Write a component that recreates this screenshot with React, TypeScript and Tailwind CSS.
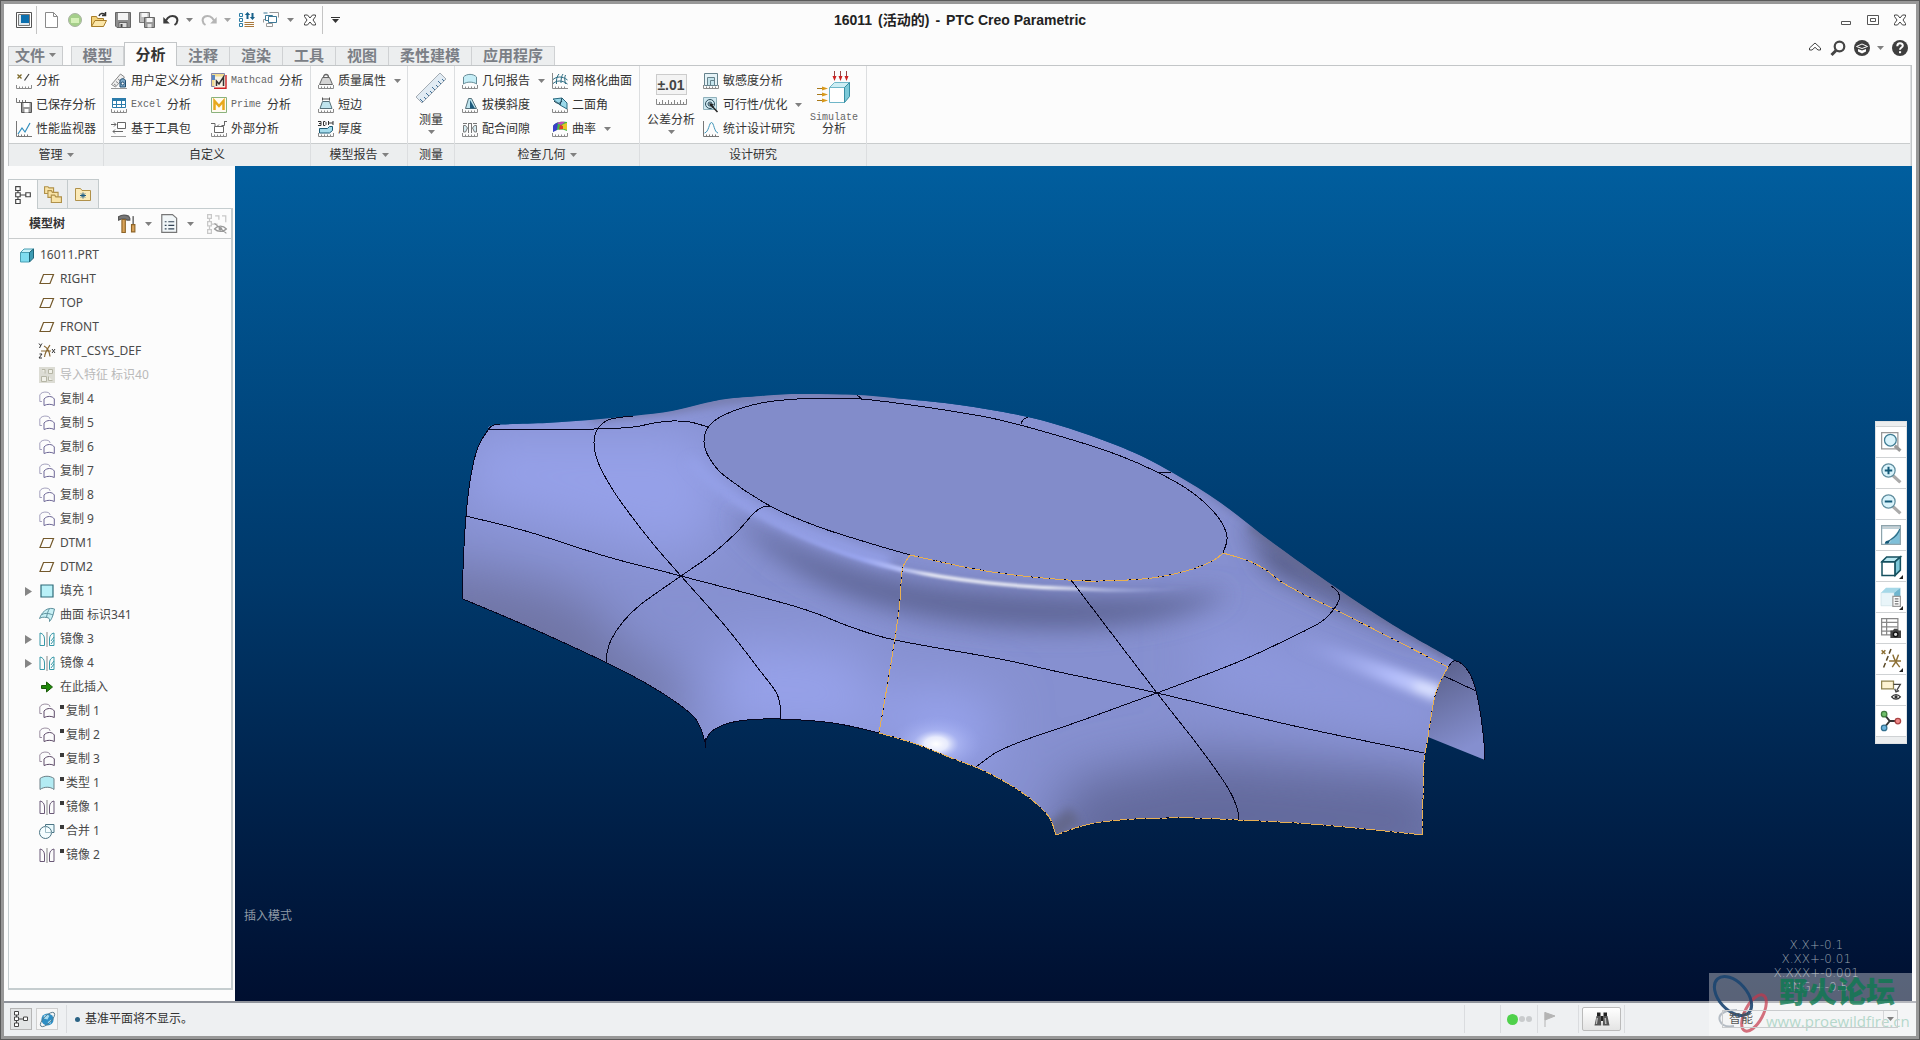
import type { ReactNode } from "react";
import clsx from "clsx";

/* ---------- icons, all on a 16x16 grid ---------- */

const Ruler = () => (
  <path d="M.5 12v3.500h15V12M3.500 13.500v2M6.500 13.500v2M9.500 13.500v2M12.500 13.500v2" stroke="#8a8a8a" fill="none" />
);

const Copy = ({ color }: { color: string }) => (
  <g fill="none" stroke={color}>
    <path d="M3 10.500H.8V4C2 1.500 5 .7 8 1.200c2 .4 3 1.300 3 2.800" opacity=".6" />
    <path d="M5 14.500V8c1.500-1.700 3.500-2.500 5.500-2.500S14.500 6.500 15.300 8v6.500c-3-1.600-7-1.600-10.300 0z" />
  </g>
);

const Mirror = ({ color, accent }: { color: string; accent?: boolean }) => (
  <g fill="none" stroke={color}>
    <path d="M1 2v12.500h4.500V8C5.500 5 4 2.500 1 2z" />
    <path d="M15 2v12.500h-4.500V8c0-3 1.500-5.500 4.500-6z" />
    <path d="M8 1v15" stroke="#888" />
    {accent && <path d="M12 10l3-4M12 13l3-4" />}
  </g>
);

const icons: Record<string, ReactNode> = {
  app: (
    <>
      <path d="M.5.500h15v15H.500z" fill="#fff" stroke="#555" />
      <path d="M2.500 2.500h11v11h-11z" fill="#dfe9ee" stroke="#777" />
      <path d="M5 3h8v8H5z" fill="#0b6fae" />
    </>
  ),
  newFile: <path d="M2.500.500h8l4 4v11h-12zM10.500.500v4h4" fill="#fff" stroke="#8a8a8a" />,
  globe: (
    <>
      <circle cx="8" cy="8" r="6.500" fill="#a5cf8a" stroke="#a9b3a2" />
      <path d="M4 6h8v5H4z" fill="#d5f0b8" />
    </>
  ),
  open: (
    <>
      <path d="M.5 14V4.500h5l1 2h6V14z" fill="#f3d27a" stroke="#a87d29" />
      <path d="M.5 14.500L4 8.500h11.500l-3 6z" fill="#fbe6a8" stroke="#a87d29" />
      <path d="M8 4c1-3 4-3 6-1.500M14.500 0v3.500H11" fill="none" stroke="#333" strokeWidth="1.500" />
    </>
  ),
  save: (
    <>
      <path d="M.5.500h15v15H2l-1.500-1.500z" fill="#8d8d8d" stroke="#666" />
      <path d="M3 1h10v7H3z" fill="#f4f4f4" />
      <path d="M4 10.500h8v5H4z" fill="#ddd" stroke="#666" />
      <path d="M5.500 12h2v3h-2z" fill="#444" />
    </>
  ),
  saveAll: (
    <>
      <path d="M.5.500h10v10H.500z" fill="#bbb" stroke="#777" />
      <path d="M2.500 1h6v4h-6z" fill="#f7f7f7" />
      <path d="M5.500 5.500h10v10h-10z" fill="#9a9a9a" stroke="#666" />
      <path d="M7.500 6h6v4h-6z" fill="#f7f7f7" />
      <path d="M8.500 12h4v3.500h-4z" fill="#e5e5e5" />
    </>
  ),
  undo: (
    <>
      <path d="M3 8.500C5 4.500 9 3 12 4.500c3.500 1.800 3 6.500-.5 8.500" fill="none" stroke="#3c3c3c" strokeWidth="2" />
      <path d="M.3 5v6.500h6.500z" fill="#3c3c3c" />
    </>
  ),
  redo: (
    <>
      <path d="M13 8.500C11 4.500 7 3 4 4.500.5 6.300 1 11 4.500 13" fill="none" stroke="#b5b5b5" strokeWidth="2" />
      <path d="M15.700 5v6.500H9.200z" fill="#b5b5b5" />
    </>
  ),
  regen: (
    <>
      <path d="M.5 1.500h3v3h-3zM.5 6.500h3v3h-3zM.5 11.500h3v3h-3z" fill="none" stroke="#2b7da5" />
      <path d="M5.500 10.500H15M5.500 12.500H15M5.500 14.500H15" stroke="#a9793c" fill="none" />
      <path d="M7.500 7V3H5.800L8.500 0l2.700 3H9.500v4zM12.500 1v4h-1.700l2.700 3 2.500-3h-1.500V1z" fill="#18618a" />
    </>
  ),
  windows: (
    <g fill="#fff" stroke="#3c7896">
      <path d="M.5 10.500V7.500h4M6.500.500h9v5" fill="none" stroke="#999" />
      <path d="M2.500 3.500h7v5h-7zM.5 1h4" />
      <path d="M5.500 4.500h8v6h-8z" />
      <path d="M3.500 11.500h6v3h-6z" stroke="#999" />
    </g>
  ),
  close: (
    <path
      d="M2.500 3h3L8 6l2.500-3h3v1.500L11 8l2.500 3.500V13h-3L8 10l-2.500 3h-3v-1.500L5 8 2.500 4.500z"
      fill="#fff"
      stroke="#444"
    />
  ),
  minimize: <path d="M3.500 9.500h9v3h-9z" fill="#fff" stroke="#555" />,
  restore: <path d="M2.500 3.500h11v9h-11zM5.500 6.500h5v3h-5z" fill="#fff" stroke="#555" />,
  collapse: <path d="M8 3L2.500 8v2H5l3-2.700L11 10h2.500V8z" fill="#fff" stroke="#444" />,
  search: (
    <g fill="none" stroke="#444" strokeWidth="2.200">
      <circle cx="9.500" cy="6.500" r="4.800" />
      <path d="M6 10.500L1.500 15" strokeWidth="3" />
    </g>
  ),
  learning: (
    <>
      <circle cx="8" cy="8" r="8" fill="#3f3f3f" />
      <path d="M2.500 6.500L8 4l5.500 2.500L8 8.500z" fill="none" stroke="#fff" />
      <path d="M4 9l4 1.500L12 9v2.500L8 13.500 4 11.500z" fill="#fff" />
    </>
  ),
  help: (
    <>
      <circle cx="8" cy="8" r="8" fill="#3f3f3f" />
      <path d="M5.300 6.200C5.300 4 6.500 3.200 8 3.200s2.800 1 2.800 2.500C10.800 7.500 8 7.700 8 9.800" fill="none" stroke="#fff" strokeWidth="2" />
      <path d="M7 11.200h2.100v2H7z" fill="#fff" />
    </>
  ),
  analysis: (
    <>
      <path d="M1.500 1.500l4 4M5.500 1.500l-4 4" stroke="#7d6a2a" strokeWidth="1.300" />
      <path d="M8.500 7.500L13 1" stroke="#444" strokeWidth="1.300" />
      <Ruler />
    </>
  ),
  savedAnalysis: (
    <>
      <path d="M.5 1v4.500h11M3.500 3v2M6.500 3v2M9.500 3v2" stroke="#777" fill="none" />
      <path d="M5.500 5.500h10v10h-10z" fill="#999" stroke="#555" />
      <path d="M7.500 6h6v4h-6zM8.500 12h4v3.500h-4z" fill="#fff" />
    </>
  ),
  monitor: (
    <>
      <path d="M.5 0v15.500H16M2.500 13.500v2M5.500 13.500v2M8.500 13.500v2M11.500 13.500v2" stroke="#777" fill="none" />
      <path d="M2 13l4-6 3 4 5-9" stroke="#2f8dbd" fill="none" strokeWidth="1.200" />
    </>
  ),
  userAnalysis: (
    <>
      <path d="M.5 11.500L9.500 1l4 3-9 10z" fill="#eee" stroke="#888" />
      <path d="M3 11l2 1.500M5 8.500l2 1.500M7 6l2 1.500" stroke="#888" />
      <path d="M0 15.500h16" stroke="#999" />
      <path d="M9 8c0-3 5.500-3 5.500 0v6H9z" fill="#7fa9c8" stroke="#1f4c70" />
      <circle cx="11.700" cy="10.500" r="1.500" fill="#fff" stroke="#1f4c70" />
    </>
  ),
  excel: (
    <>
      <path d="M1.500 1.500h13v9h-13z" fill="#fff" stroke="#2c7cab" />
      <path d="M1 1h14v3H1z" fill="#2c7cab" />
      <path d="M1.500 7.500h13M5.500 2v9M10.500 2v9" stroke="#2c7cab" />
      <Ruler />
    </>
  ),
  toolkit: (
    <>
      <path d="M6.500 1.500h8v6h-8z" fill="#fff" stroke="#666" />
      <path d="M0 3.500h5M3 1.500l2 2-2 2M12 10.500H2M4 8.500l-2 2 2 2" fill="none" stroke="#666" />
      <path d="M0 15.500h15" stroke="#999" />
    </>
  ),
  mathcad: (
    <>
      <path d="M.5.500h13v13H.500z" fill="#f1dc92" stroke="#88a" />
      <path d="M3.500 3.500h11v11h-11z" fill="#f7f3e6" />
      <path d="M15 2v13.200H3" stroke="#c22" strokeWidth="1.400" fill="none" />
      <path d="M5.500 13V8l2.500 3 4.500-7v9" stroke="#333" strokeWidth="1.500" fill="none" />
      <path d="M1 2h3v5H1z" fill="#5a86c0" />
    </>
  ),
  prime: (
    <>
      <path d="M.5.500h15v15H.500z" fill="#fffaf0" stroke="#8ab27c" />
      <path d="M3.500 13V4l4.500 5 4.500-5v9" fill="none" stroke="#e8a81c" strokeWidth="2.500" />
    </>
  ),
  external: (
    <>
      <path d="M3.500 5.500h9v6h-9z" fill="#fff" stroke="#666" />
      <path d="M0 2.500h4v3M13.500 1v3.500h-3M16 .5h-3M6 5.500l2-2" fill="none" stroke="#666" />
      <Ruler />
    </>
  ),
  mass: (
    <>
      <path d="M4.500 4.500h7l3 7h-13z" fill="#d4d4d4" stroke="#666" />
      <path d="M5.500 4.500c0-4 5-4 5 0" fill="none" stroke="#666" strokeWidth="1.300" />
      <Ruler />
    </>
  ),
  shortEdge: (
    <>
      <path d="M4.500 4.500h7l2.500 7H2z" fill="#bfe4ee" stroke="#55707a" />
      <path d="M4.500.500v3M11.500.500v3M4.500 2h7" stroke="#555" fill="none" />
      <Ruler />
    </>
  ),
  thickness: (
    <>
      <path d="M1.500 7.500h8l2-2h3v4l-3 2.500h-10z" fill="#a5dcec" stroke="#1c5b75" />
      <path d="M0 .5h3v4H0M1 2.500h2M5.500.500v4H7l1-1V1.500l-1-1zM10.500 0v4M15 0v4M10.500 2H15" fill="none" stroke="#333" />
      <Ruler />
    </>
  ),
  geomReport: (
    <>
      <path d="M1.500 11V4c3-3.500 10-3.500 13 0v7c-3-2.500-10-2.500-13 0z" fill="#c5edf6" stroke="#668b96" />
      <Ruler />
    </>
  ),
  draft: (
    <>
      <path d="M3.500 11.500L6.500 1.500h3l5 10z" fill="#bfe4ee" stroke="#55707a" />
      <path d="M8 3v8.500h5z" fill="#1e5b7d" />
      <Ruler />
    </>
  ),
  clearance: (
    <>
      <path d="M1.500 4.500h2l2 2.500-2 4h-2zM14.500 4.500h-2L10.500 7l2 4h2z" fill="#d5ecf2" stroke="#777" />
      <path d="M6.500 3v9M9.500 3v9M1 2.500h4M11 2.500h4M6 2.500h4" stroke="#777" fill="none" />
      <Ruler />
    </>
  ),
  mesh: (
    <>
      <path d="M.5 7c4-4 10-4 15 0M.5 11c4-4 10-4 15 0M4.500 11C4 7 5 3 7 1M9 10c0-4 .5-7 2-9M13.500 11c-1-4-1-7 0-9" fill="none" stroke="#2a6a80" />
      <path d="M.5 0v15.500H16M3.500 13.500v2M6.500 13.500v2M9.500 13.500v2M12.500 13.500v2" stroke="#8a8a8a" fill="none" />
    </>
  ),
  dihedral: (
    <>
      <path d="M1 2l9-1 5 5v6L8 8z" fill="#9bd9ea" stroke="#2a6a80" />
      <path d="M2 4c3 3 6 3 8 0M10 1L8 8" stroke="#173f52" fill="none" />
      <Ruler />
    </>
  ),
  curvature: (
    <>
      <path d="M1 11V5c2-4 8-5 14-4v9c-5-2-10-2-14 1z" fill="#45b648" />
      <path d="M1 11V5c1-2 3-3 5-3.500L5 9z" fill="#3a3fc9" />
      <path d="M5 2c2-1 5-1.500 8-1L9 4z" fill="#c04ac0" />
      <path d="M10 4c2-1 3-2 5-2v7c-2-1-3-1-5-1z" fill="#e8c526" />
      <path d="M8 4l3 1v3l-4 .5z" fill="#de3b2b" />
      <Ruler />
    </>
  ),
  sensitivity: (
    <>
      <path d="M1.500.500h13v12h-13z" fill="#e6f3f7" stroke="#66828c" />
      <path d="M4.500 4.500h7v8h-7zM7.500 7.500h4v5h-4z" fill="#c5e4ec" stroke="#66828c" />
      <Ruler />
    </>
  ),
  feasibility: (
    <>
      <path d="M.5.500h13v12H.500z" fill="#d0e9f1" stroke="#8fb0bb" />
      <circle cx="7" cy="7" r="4.500" fill="none" stroke="#2b4b5a" />
      <circle cx="7" cy="7" r="2" fill="none" stroke="#2b4b5a" />
      <path d="M7 7l7.500 8" stroke="#222" strokeWidth="1.500" />
      <path d="M6 6l5 1.500L8 10z" fill="#222" />
    </>
  ),
  statistics: (
    <>
      <path d="M.5 0v15.500H16M3.500 13.500v2M6.500 13.500v2M9.500 13.500v2M12.500 13.500v2" stroke="#777" fill="none" />
      <path d="M1.500 12C6 11 6 1.500 8.500 1.500S11 11 15 12" fill="none" stroke="#3f94b8" />
    </>
  ),
  treeTab: (
    <path d="M1.500.500h4v3.500h-4zM1.500 6h4v3.500h-4zM1.500 12h4v3.500h-4zM10.500 6h4v3.500h-4zM3.500 4v2M3.500 9.500V12M5.500 8h5" fill="#fff" stroke="#444" />
  ),
  folders: (
    <g fill="#f8e3a6" stroke="#b0914a">
      <path d="M.5 1.500h3l1 1h4v5h-8z" />
      <path d="M3.500 5h3l1 1.500h5v4.500h-9z" />
      <path d="M6.500 9h3l1 1.500h5v5h-9z" />
    </g>
  ),
  favorites: (
    <>
      <path d="M.5 14.500v-12h5l1.500 2h8.500v10z" fill="#fbeab8" stroke="#b0914a" />
      <path d="M8 6.500v6M5 9.500h6M6 7.500l4 4M10 7.500l-4 4" stroke="#1c5b85" />
    </>
  ),
  hammer: (
    <>
      <path d="M.5 1.500C3 0 7 0 9.500 1l1 2v1.500H8L6.500 3.500H3L.5 4.500z" fill="#777" stroke="#555" />
      <path d="M3.500 4h3v11.500h-3z" fill="#d9a35a" stroke="#8d6427" />
      <path d="M13.500 1v7" stroke="#777" strokeWidth="1.500" />
      <path d="M12 8.500h3V15h-3z" fill="#d9a35a" stroke="#8d6427" />
    </>
  ),
  listPage: (
    <>
      <path d="M1.500.500h9l3.500 3v12H1.500z" fill="#f1f6f8" stroke="#777" />
      <path d="M4 6.500h1.500M4 9.500h1.500M4 12.500h1.500M7 6.500h5M7 9.500h5M7 12.500h5" stroke="#345" />
    </>
  ),
  treeHidden: (
    <>
      <path d="M.5.500h3v3h-3zM.5 6h3v3.500h-3zM.5 12.500h3v3h-3zM6.500 1.500h3v3M2 3.500V6M2 9.500v3M3.500 8h5M12 1.500h3v5" fill="none" stroke="#c8c8c8" />
      <path d="M6 12c2.500-3 7-3 9.500 0-2.500 2.500-7 2.500-9.500 0zM6 7.500l9.500 8" fill="none" stroke="#999" />
      <circle cx="10.700" cy="11.800" r="1.500" fill="#999" />
    </>
  ),
  part: (
    <>
      <path d="M1.500 5.500h9v9.500h-9z" fill="#7fdcef" stroke="#4b9fb3" />
      <path d="M1.500 5.500L5 2h9.500l-4 3.500z" fill="#c9f1f8" stroke="#4b9fb3" />
      <path d="M10.500 5.500l4-3.500v9l-4 4z" fill="#3d9cb4" stroke="#1e6376" />
    </>
  ),
  plane: <path d="M4.500 3.500h10l-3.500 9H1z" fill="none" stroke="#74592c" strokeWidth="1.200" />,
  csys: (
    <>
      <path d="M2 8h10M5 3c3 1.500 5.500 6 6 10.500M11 2c-2 3-5 7-5.500 12" stroke="#8a6a34" fill="none" strokeWidth="1.200" />
      <path d="M0 .5l1.500 2L3 .5M2 2L.5 5M.5 11H3l-3 4h3M13 6l3 4M16 6l-3 4" stroke="#333" fill="none" />
    </>
  ),
  imported: (
    <>
      <path d="M0 0h16v16H0z" fill="#dcdcd4" />
      <path d="M2.500 9.500h5v5h-5zM9.500 2.500h4v4h-4zM3 2.500h3v4M9.500 9.500v4h4" fill="#f0f0e8" stroke="#b5b5a5" />
    </>
  ),
  copy: <Copy color="#6d6796" />,
  copyDark: <Copy color="#5d4a68" />,
  fill: <path d="M2 2h12v12H2z" fill="#b9f1f8" stroke="#2e6a78" strokeWidth="1.200" />,
  surface: (
    <>
      <path d="M.5 11.500C2 8 3 6 5.500 4 9 1 12 1 15.500 2L14 8c-1 3-2 5-3.500 6.500.5-2.500-.5-4-3-4-2.500-.5-5-.5-7 1z" fill="#c8f0f5" stroke="#5b8f9c" />
      <path d="M7.500 10.500C8 7 9 4 10.500 1.500M3 7.500c4-2 7-1 11 .5" fill="none" stroke="#5b8f9c" />
    </>
  ),
  mirrorCyan: <Mirror color="#3899a8" accent />,
  mirrorDark: <Mirror color="#6b5a78" />,
  insertHere: <path d="M2.500 6.500h5V3l6 5-6 5V9.500h-5z" fill="#1f8a0a" stroke="#1a5a08" />,
  style: <path d="M1 14.500V3.500c4-3 10-3 14 0v11c-3.500-3-10-3-14 0z" fill="#b3ebf3" stroke="#6c7f86" />,
  merge: (
    <>
      <path d="M6.500 9.500V1.500h8.500v8z" fill="#eafafd" stroke="#4c7585" />
      <circle cx="6.500" cy="9.500" r="6" fill="#f5fdff" stroke="#4c7585" />
      <path d="M6.500 3.500v6h6" fill="none" stroke="#9dbcc6" />
    </>
  ),
  browser: (
    <>
      <circle cx="8" cy="8" r="6.500" fill="#2e8ec4" />
      <path d="M4 4c2-2 4-1 6 0L8 8 4 7zM8 11l4-3-1 5z" fill="#a6dcf3" />
      <ellipse cx="8" cy="8" rx="10" ry="4" transform="rotate(-45 8 8)" fill="none" stroke="#57798a" />
    </>
  ),
  flag: <path d="M3 1v15M3 1.500l10 3.500-10 4z" fill="#b4b4b4" stroke="#b4b4b4" />,
  binoculars: (
    <>
      <path d="M3 1.500h3.500V5H3zM9.500 1.500H13V5H9.500zM6.500 5h3v5h-3z" fill="#222" />
      <path d="M2.500 5h4.200l.5 9.500H.5zM9.300 5h4.200l2 9.500H8.800z" fill="#555" />
      <path d="M2.500 7h1.500L3 13H1.800zM10.500 7H12l.5 6H11z" fill="#bbb" />
    </>
  ),
  refit: (
    <>
      <path d="M.5.500h13v13H.500z" fill="#fff" stroke="#999" />
      <path d="M11 11l4.500 4" stroke="#999" strokeWidth="2.500" />
      <circle cx="7.500" cy="6.500" r="4.700" fill="#d9f3fb" stroke="#3f7d94" />
    </>
  ),
  zoomIn: (
    <>
      <path d="M9.500 10l6 5.500" stroke="#aaa" strokeWidth="2.500" />
      <circle cx="6" cy="6" r="5.300" fill="#d9f3fb" stroke="#5f8d9e" />
      <path d="M3 6h6M6 3v6" stroke="#145a78" strokeWidth="1.600" />
    </>
  ),
  zoomOut: (
    <>
      <path d="M9.500 10l6 5.500" stroke="#aaa" strokeWidth="2.500" />
      <circle cx="6" cy="6" r="5.300" fill="#d9f3fb" stroke="#5f8d9e" />
      <path d="M3 6h6" stroke="#145a78" strokeWidth="1.600" />
    </>
  ),
  repaint: (
    <>
      <path d="M.5.500h15v15H.500z" fill="#7fbfd8" stroke="#8fa3ab" />
      <path d="M1 3h14L6 15H1z" fill="#fff" />
      <path d="M15 3c-1 5-5 7-9 10" stroke="#2e6f88" fill="none" />
      <path d="M3 15c0-2 2-3 4-2.500L6 15z" fill="#155a7a" />
      <path d="M1 1h14v2H1z" fill="#c9d0d3" />
    </>
  ),
  display: (
    <g stroke="#15505f" strokeWidth="1.200">
      <path d="M.8 4.500h10.500v11H.800z" fill="#fff" />
      <path d="M.8 4.500L4.500.8h11L11.300 4.500z" fill="#b8e6f0" />
      <path d="M11.300 4.500L15.500.8v10.500l-4.200 4.200z" fill="#7cc7d8" />
    </g>
  ),
  savedViews: (
    <>
      <path d="M0 4.500h10.500V15H0z" fill="#e9f5f9" stroke="#c9dde4" strokeWidth=".5" />
      <path d="M0 4.500L4 .5h11.500l-5 4z" fill="#a5d8e8" />
      <path d="M10.500 4.500l5-4v8h-5z" fill="#6fb6cf" />
      <path d="M9.500 7.500h6v8h-6z" fill="#fff" stroke="#999" />
      <path d="M11 9.500h3M11 11.500h3M11 13.500h3" stroke="#777" />
    </>
  ),
  viewManager: (
    <>
      <path d="M.5.500h13v13H.500zM.5 3.500h13M.5 7h13M.5 10.500h13M4.500.500v13" fill="#fff" stroke="#888" />
      <path d="M7.500 10h2l1-1.500h2.500L14 10h2v6H7.500z" fill="#444" />
      <circle cx="11.700" cy="13" r="1.800" fill="#ddd" stroke="#111" />
    </>
  ),
  datum: (
    <g fill="none" stroke="#8c6f33" strokeWidth="1.200">
      <path d="M.5 1l3 3M3.500 1l-3 3M6.500 9.500H16M9.500 4.500c1 4 3 7 5.500 10M14 4.500c-1 4-2.500 7-5 10" />
      <path d="M8 0L2 15" strokeDasharray="4 2" stroke="#5b4a28" />
    </g>
  ),
  annotation: (
    <>
      <path d="M.5.800h9.500V7H.500z" fill="#fdf3d2" stroke="#8f834f" />
      <path d="M10 3.500h5.500l-3 5M11 7l1 2.500 2.500-1" fill="none" stroke="#444" />
      <path d="M8.500 13.500c2-2.500 5-2.500 7 0-2 2.500-5 2.500-7 0z" fill="#fff" stroke="#333" />
      <circle cx="12" cy="13.500" r="1.300" fill="#333" />
    </>
  ),
  spin: (
    <>
      <path d="M2.500 2.500L7 8h6.500M7 8l-4.500 5.500" stroke="#333" strokeWidth="1.500" fill="none" />
      <circle cx="2.500" cy="2.500" r="2.200" fill="#6fbf6a" stroke="#3f7a3d" />
      <circle cx="13.500" cy="8" r="2.200" fill="#e88" stroke="#a44" />
      <circle cx="2.500" cy="13.500" r="2.200" fill="#6cb4dd" stroke="#32708f" />
    </>
  ),
};

const Icon = ({ name, className = "size-4" }: { name: string; className?: string }) => (
  <svg viewBox="0 0 16 16" className={clsx("shrink-0 overflow-visible", className)} aria-hidden="true">
    {icons[name]}
  </svg>
);

const Caret = ({ className = "text-[#808080]" }: { className?: string }) => (
  <svg viewBox="0 0 7 4" className={clsx("h-1 w-[7px] shrink-0", className)} aria-hidden="true">
    <path d="M0 0h7L3.500 4z" fill="currentColor" />
  </svg>
);

/* ---------- title bar ---------- */

const TitleBar = () => (
  <header className="grid h-[32px] grid-cols-[1fr_auto_1fr] items-center">
    <div className="flex items-center pl-3">
      <button aria-label="窗口"><Icon name="app" /></button>
      <span className="mr-[6px] ml-1 h-7 w-px bg-[#c4c4c4]" />
      <div className="flex items-center gap-2">
        <button aria-label="新建"><Icon name="newFile" /></button>
        <button aria-label="连接"><Icon name="globe" /></button>
        <button aria-label="打开"><Icon name="open" /></button>
        <button aria-label="保存"><Icon name="save" /></button>
        <button aria-label="全部保存"><Icon name="saveAll" /></button>
        <button aria-label="撤消" className="flex items-center gap-[7px]"><Icon name="undo" /><Caret /></button>
        <button aria-label="重做" className="flex items-center gap-[7px]"><Icon name="redo" /><Caret className="text-[#a5a5a5]" /></button>
        <button aria-label="重新生成"><Icon name="regen" /></button>
        <button aria-label="切换窗口" className="flex items-center gap-2"><Icon name="windows" /><Caret /></button>
        <button aria-label="关闭窗口"><Icon name="close" /></button>
      </div>
      <span className="mx-1 h-7 w-px bg-[#c4c4c4]" />
      <button aria-label="自定义" className="ml-1 flex flex-col items-center gap-px">
        <span className="h-px w-[9px] bg-[#333]" />
        <Caret className="text-[#333]" />
      </button>
    </div>
    <h1 className="flex gap-[6px] text-sm font-bold text-[#222] font-['Liberation_Sans','Noto_Sans_CJK_SC',sans-serif]">
      <span>16011</span>
      <span>(活动的)</span>
      <span>-</span>
      <span>PTC Creo Parametric</span>
    </h1>
    <div className="flex items-center justify-end gap-[11px] pr-2">
      <button aria-label="最小化"><Icon name="minimize" /></button>
      <button aria-label="还原"><Icon name="restore" /></button>
      <button aria-label="关闭"><Icon name="close" /></button>
    </div>
  </header>
);

/* ---------- ribbon ---------- */

const tabs = ["模型", "分析", "注释", "渲染", "工具", "视图", "柔性建模", "应用程序"];

const TabBar = () => (
  <nav className="flex h-[29px] items-end pl-1 text-[15px] font-bold text-[#7b7f86]">
    <button className="mr-2 flex h-[19px] w-[55px] items-center justify-center gap-1 border border-b-0 border-[#c9cbcd] bg-[#eceeef] pb-[2px]">
      文件 <Caret />
    </button>
    {tabs.map((tab) => (
      <button
        key={tab}
        className={clsx(
          "flex items-center justify-center",
          tab.length > 2 ? "w-[83px]" : "w-[53px]",
          tab === "分析"
            ? "z-10 -mb-px h-6 border border-b-0 border-[#c3c6c8] bg-[#fcfcfc] text-[#333]"
            : "h-[19px] border-t border-r border-[#cfd1d3] bg-[#eceeef] pb-[2px]",
          tab === "模型" && "border-l",
        )}
      >
        {tab}
      </button>
    ))}
    <div className="ml-auto flex items-center gap-[7px] self-center pr-2 pb-[5px]">
      <button aria-label="最小化功能区"><Icon name="collapse" /></button>
      <button aria-label="搜索"><Icon name="search" /></button>
      <button aria-label="学习" className="ml-px flex items-center gap-[7px]"><Icon name="learning" /><Caret /></button>
      <button aria-label="帮助" className="ml-px"><Icon name="help" /></button>
    </div>
  </nav>
);

interface ToolProps {
  icon: string;
  latin?: string;
  label: string;
  menu?: boolean;
}

const Tool = ({ icon, latin, label, menu }: ToolProps) => (
  <button className="flex h-6 items-center gap-1 whitespace-nowrap">
    <Icon name={icon} />
    <span className="flex items-center">
      {latin && <span className="mr-[6px] font-['Liberation_Mono',monospace] text-[10px] text-[#666]">{latin}</span>}
      {label}
    </span>
    {menu && <span className="pl-1"><Caret /></span>}
  </button>
);

interface GroupProps {
  title: string;
  menu?: boolean;
  width: string;
  children?: ReactNode;
}

const Group = ({ title, menu, width, children }: GroupProps) => (
  <section className={clsx("flex flex-col border-r border-[#dcdee0]", width)}>
    <div className="flex h-[77px] items-start px-[7px] pt-[3px]">{children}</div>
    <h2 className="flex h-[23px] items-center justify-center gap-1 border-t border-[#c9cccd] bg-[#eceeef] pb-px text-xs">
      {title}
      {menu && <Caret />}
    </h2>
  </section>
);

const Ribbon = () => (
  <div className="mx-1 flex border border-b-0 border-[#c3c6c8] bg-[#fcfcfc] text-xs text-[#333]">
    <Group title="管理" menu width="w-[95px]">
      <div className="flex flex-col">
        <Tool icon="analysis" label="分析" />
        <Tool icon="savedAnalysis" label="已保存分析" />
        <Tool icon="monitor" label="性能监视器" />
      </div>
    </Group>
    <Group title="自定义" width="w-[207px]">
      <div className="flex w-[100px] flex-col">
        <Tool icon="userAnalysis" label="用户定义分析" />
        <Tool icon="excel" latin="Excel" label="分析" />
        <Tool icon="toolkit" label="基于工具包" />
      </div>
      <div className="flex flex-col">
        <Tool icon="mathcad" latin="Mathcad" label="分析" />
        <Tool icon="prime" latin="Prime" label="分析" />
        <Tool icon="external" label="外部分析" />
      </div>
    </Group>
    <Group title="模型报告" menu width="w-[97px]">
      <div className="flex flex-col">
        <Tool icon="mass" label="质量属性" menu />
        <Tool icon="shortEdge" label="短边" />
        <Tool icon="thickness" label="厚度" />
      </div>
    </Group>
    <Group title="测量" width="w-[47px]">
      <button className="flex flex-col items-center pt-[3px]">
        <svg viewBox="0 0 32 32" className="size-8" aria-hidden="true">
          <path d="M1 25L25 1l6 6L7 31z" fill="#e1ebf3" stroke="#a4acb4" />
          <path d="M8 30l-3-3M11 27l-2-2M14 24l-3-3M17 21l-2-2M20 18l-3-3M23 15l-2-2M26 12l-3-3M29 9l-2-2" stroke="#3f6f98" />
        </svg>
        <span className="mt-2 leading-4">测量</span>
        <span className="pt-[2px]"><Caret /></span>
      </button>
    </Group>
    <Group title="检查几何" menu width="w-[185px]">
      <div className="flex w-[90px] flex-col">
        <Tool icon="geomReport" label="几何报告" menu />
        <Tool icon="draft" label="拔模斜度" />
        <Tool icon="clearance" label="配合间隙" />
      </div>
      <div className="flex flex-col">
        <Tool icon="mesh" label="网格化曲面" />
        <Tool icon="dihedral" label="二面角" />
        <Tool icon="curvature" label="曲率" menu />
      </div>
    </Group>
    <Group title="设计研究" width="w-[227px]">
      <button className="mr-2 flex w-[48px] flex-col items-center pt-[5px]">
        <span className="flex h-[21px] w-[31px] items-center justify-center border border-[#ccc] bg-[#f3f3f3] text-sm font-bold text-[#444] font-['Liberation_Sans',sans-serif]">
          ±.01
        </span>
        <svg viewBox="0 0 31 6" className="mt-1 h-[6px] w-[31px]" aria-hidden="true">
          <path d="M.5 0v5.500h30V0M3.500 3v2M6.500 1v4M9.500 3v2M12.500 1v4M15.500 3v2M18.500 1v4M21.500 3v2M24.500 1v4M27.500 3v2" fill="none" stroke="#888" />
        </svg>
        <span className="mt-[7px] leading-4">公差分析</span>
        <span className="pt-[2px]"><Caret /></span>
      </button>
      <div className="flex w-[103px] flex-col">
        <Tool icon="sensitivity" label="敏感度分析" />
        <Tool icon="feasibility" label="可行性/优化" menu />
        <Tool icon="statistics" label="统计设计研究" />
      </div>
      <button className="ml-1 flex flex-col items-center pt-[2px]">
        <svg viewBox="0 0 34 34" className="size-[34px]" aria-hidden="true">
          <path d="M12.500 16.500h15v15h-15z" fill="#fff" stroke="#6fb6c8" />
          <path d="M12.500 16.500l5-5h15l-5 5z" fill="#cdeef4" stroke="#6fb6c8" />
          <path d="M27.500 16.500l5-5v14l-5 6z" fill="#7cc9d8" stroke="#388fa3" />
          <path d="M17.500 0v9M23.500 0v9M29.500 0v9" stroke="#944" />
          <path d="M15.500 5h4l-2 5zM21.500 5h4l-2 5zM27.500 5h4l-2 5z" fill="#c22" />
          <path d="M0 17.500h8M0 23.500h8M0 29.500h8" stroke="#a8791c" />
          <path d="M5 15.500v4l6-2zM5 21.500v4l6-2zM5 27.500v4l6-2z" fill="#d99a1c" />
        </svg>
        <span className="pt-2 font-['Liberation_Mono',monospace] text-[10px] leading-[10px] text-[#666]">Simulate</span>
        <span className="leading-3">分析</span>
      </button>
    </Group>
    <Group title="" width="min-w-0 flex-1" />
  </div>
);

/* ---------- model tree ---------- */

interface TreeItem {
  icon: string;
  label: string;
  expandable?: boolean;
  suppressed?: boolean;
  pending?: boolean;
}

const treeItems: TreeItem[] = [
  { icon: "plane", label: "RIGHT" },
  { icon: "plane", label: "TOP" },
  { icon: "plane", label: "FRONT" },
  { icon: "csys", label: "PRT_CSYS_DEF" },
  { icon: "imported", label: "导入特征 标识40", suppressed: true },
  { icon: "copy", label: "复制 4" },
  { icon: "copy", label: "复制 5" },
  { icon: "copy", label: "复制 6" },
  { icon: "copy", label: "复制 7" },
  { icon: "copy", label: "复制 8" },
  { icon: "copy", label: "复制 9" },
  { icon: "plane", label: "DTM1" },
  { icon: "plane", label: "DTM2" },
  { icon: "fill", label: "填充 1", expandable: true },
  { icon: "surface", label: "曲面 标识341" },
  { icon: "mirrorCyan", label: "镜像 3", expandable: true },
  { icon: "mirrorCyan", label: "镜像 4", expandable: true },
  { icon: "insertHere", label: "在此插入" },
  { icon: "copyDark", label: "复制 1", pending: true },
  { icon: "copyDark", label: "复制 2", pending: true },
  { icon: "copyDark", label: "复制 3", pending: true },
  { icon: "style", label: "类型 1", pending: true },
  { icon: "mirrorDark", label: "镜像 1", pending: true },
  { icon: "merge", label: "合并 1", pending: true },
  { icon: "mirrorDark", label: "镜像 2", pending: true },
];

const ModelTree = () => (
  <aside className="flex w-[231px] shrink-0 flex-col pt-[13px] pr-[2px] pb-[11px] pl-1">
    <div className="flex h-[29px]">
      <button aria-label="模型树" className="z-10 -mb-px flex w-[30px] items-center justify-center border border-b-0 border-[#c3cacc] bg-[#fcfcfc]">
        <Icon name="treeTab" className="size-[18px]" />
      </button>
      <button aria-label="文件夹浏览器" className="flex w-[30px] items-center justify-center border-t border-r border-[#c3cacc] bg-[#eceeef]">
        <Icon name="folders" className="size-[18px]" />
      </button>
      <button aria-label="收藏夹" className="flex w-[31px] items-center justify-center border-t border-r border-[#c3cacc] bg-[#eceeef]">
        <Icon name="favorites" />
      </button>
    </div>
    <div className="flex min-h-0 flex-1 flex-col border border-r-2 border-b-2 border-[#c5cdcf] bg-[#fcfcfc]">
      <div className="flex h-[30px] shrink-0 items-center border-b border-[#c9cccd] pr-1 pl-5 text-xs font-bold text-[#333]">
        <h2 className="flex-1">模型树</h2>
        <button aria-label="设置" className="flex items-center gap-[9px]"><Icon name="hammer" className="size-[18px]" /><Caret /></button>
        <button aria-label="显示" className="ml-2 flex items-center gap-2"><Icon name="listPage" className="size-[19px]" /><Caret /></button>
        <button aria-label="过滤" className="ml-[13px]"><Icon name="treeHidden" className="size-5" /></button>
      </div>
      <ul className="flex flex-col pt-1 text-xs text-[#4a4a4a]">
        <li className="flex h-6 items-center gap-[5px] pl-[10px]">
          <Icon name="part" />
          16011.PRT
        </li>
        {treeItems.map((item) => (
          <li key={item.label} className={clsx("flex h-6 items-center pl-4", item.suppressed && "text-[#b9b9b9]")}>
            <span className="w-[14px]">
              {item.expandable && (
                <svg viewBox="0 0 7 9" className="h-[9px] w-[7px]" aria-hidden="true">
                  <path d="M0 0l7 4.500L0 9z" fill="#858585" />
                </svg>
              )}
            </span>
            <Icon name={item.icon} />
            {item.pending && <span className="ml-[5px] mb-2 size-1 bg-[#3a3a3a]" />}
            <span className={item.pending ? "ml-[2px]" : "ml-[5px]"}>{item.label}</span>
          </li>
        ))}
      </ul>
    </div>
  </aside>
);

/* ---------- 3D view ---------- */

type Point = [number, number];

// Catmull-Rom through the given points, written as cubic segments
const curve = (pts: Point[], start = "M") => {
  let d = `${start}${pts[0][0]} ${pts[0][1]}`;
  for (let i = 0; i < pts.length - 1; i++) {
    const p0 = pts[i - 1] ?? pts[i];
    const p1 = pts[i];
    const p2 = pts[i + 1];
    const p3 = pts[i + 2] ?? p2;
    d += `C${p1[0] + (p2[0] - p0[0]) / 6} ${p1[1] + (p2[1] - p0[1]) / 6} ${p2[0] - (p3[0] - p1[0]) / 6} ${p2[1] - (p3[1] - p1[1]) / 6} ${p2[0]} ${p2[1]}`;
  }
  return d;
};

const topEdge: Point[] = [[488, 430], [495, 425], [547, 423], [590, 420], [633, 416], [672, 411], [701, 404], [726, 399], [761, 396], [797, 394], [858, 395], [904, 399], [960, 405], [1028, 417], [1083, 433], [1135, 453], [1175, 474], [1221, 503], [1273, 543], [1335, 587], [1393, 625], [1454, 660]];
const rightEdge: Point[] = [[1448, 667], [1440, 682], [1434, 700], [1428, 737], [1424, 763], [1423, 800], [1423, 835]];
const bottomRight: Point[] = [[1423, 835], [1355, 828], [1297, 823], [1238, 820], [1193, 818], [1135, 819], [1090, 824], [1056, 835]];
const bottomMiddle: Point[] = [[1056, 835], [1049, 817], [1032, 800], [1007, 783], [980, 769], [954, 759], [916, 744], [879, 733], [833, 723], [780, 719], [747, 720], [726, 724], [711, 732], [705, 742]];
const bottomLeft: Point[] = [[705, 742], [700, 727], [690, 713], [654, 688], [607, 663], [529, 627], [463, 599]];
const leftEdge: Point[] = [[463, 599], [463, 570], [466, 516], [471, 475], [478, 447], [488, 430]];
const flapEdge: Point[] = [[1448, 667], [1454, 661], [1462, 664], [1470, 674], [1476, 691], [1481, 717], [1484, 743], [1485, 760]];

const rimBack: Point[] = [[910, 555], [869, 543], [819, 527], [772, 507], [726, 477], [710, 459], [704, 442], [709, 426], [726, 414], [761, 403], [797, 399], [829, 398], [861, 399], [904, 404], [951, 411], [1000, 420], [1066, 438], [1118, 455], [1157, 472], [1193, 493], [1218, 517], [1227, 537], [1223, 553]];
const rimFront: Point[] = [[1223, 553], [1214, 560], [1193, 569], [1152, 578], [1100, 581], [1068, 580], [1014, 575], [969, 568], [910, 555]];

const seams: Point[][] = [
  [[488, 429], [594, 429], [633, 427], [654, 423], [672, 421], [690, 422], [708, 427]],
  [[633, 416], [611, 419], [599, 427], [594, 442], [598, 462], [611, 487], [629, 513], [654, 545], [681, 576], [726, 627], [761, 672], [776, 692], [780, 705], [780, 719]],
  [[772, 507], [763, 507], [754, 513], [736, 533], [711, 555], [681, 576], [640, 605], [622, 623], [611, 640], [607, 653], [607, 663]],
  [[466, 516], [529, 532], [608, 557], [681, 576], [797, 607], [851, 627], [895, 640], [1000, 659], [1059, 672], [1157, 693], [1290, 725], [1424, 753]],
  [[1331, 586], [1338, 592], [1339, 600], [1334, 609], [1321, 622], [1290, 638], [1238, 662], [1157, 693], [1083, 720], [1025, 740], [997, 752], [976, 767]],
  [[1071, 580], [1157, 693], [1200, 748], [1228, 788], [1237, 808], [1239, 820]],
  [[1444, 676], [1476, 691]],
  [[857, 395], [862, 399]],
  [[1021, 424], [1023, 420], [1028, 417]],
  [[1157, 472], [1171, 472]],
];

const selected: Point[][] = [
  rimFront,
  [[910, 555], [903, 567], [901, 583], [899, 610], [891, 663], [879, 733]],
  [[1223, 553], [1249, 561], [1266, 570], [1283, 583], [1311, 598], [1334, 609], [1393, 639], [1448, 667]],
  rightEdge,
  bottomRight,
  bottomMiddle.slice(0, 8),
];

const body = `${curve(topEdge)}${curve(rightEdge, "L")}${curve(bottomRight, "L")}${curve(bottomMiddle, "L")}${curve(bottomLeft, "L")}${curve(leftEdge, "L")}Z`;
const flap = `${curve(flapEdge)}L1428 737L1424 700L1444 664Z`;
const cap = `${curve(rimBack)}${curve(rimFront, "L")}Z`;

const Model = () => (
  <svg viewBox="235 166 1677 835" className="size-full" role="img" aria-label="16011">
    <defs>
      <clipPath id="body"><path d={body} /></clipPath>
      <filter id="soft" x="-50%" y="-50%" width="200%" height="200%"><feGaussianBlur stdDeviation="26" /></filter>
      <filter id="mid" x="-50%" y="-50%" width="200%" height="200%"><feGaussianBlur stdDeviation="12" /></filter>
      <filter id="near" x="-50%" y="-50%" width="200%" height="200%"><feGaussianBlur stdDeviation="5" /></filter>
      <filter id="fine" x="-20%" y="-50%" width="140%" height="200%"><feGaussianBlur stdDeviation="1.500" /></filter>
      <linearGradient id="flap" x1="0" y1="0" x2="0.300" y2="1">
        <stop offset="0" stopColor="#565c85" />
        <stop offset="1" stopColor="#858fcf" />
      </linearGradient>
      <linearGradient id="streak" gradientUnits="userSpaceOnUse" x1="1290" y1="640" x2="1436" y2="692">
        <stop offset="0" stopColor="#929ee8" stopOpacity="0" />
        <stop offset=".7" stopColor="#b3bdfa" />
        <stop offset="1" stopColor="#ccd4ff" />
      </linearGradient>
      <linearGradient id="shine" gradientUnits="userSpaceOnUse" x1="720" y1="0" x2="1190" y2="0">
        <stop offset="0" stopColor="#98a4ec" stopOpacity="0" />
        <stop offset=".3" stopColor="#98a4ee" />
        <stop offset=".38" stopColor="#b5bff8" />
        <stop offset=".45" stopColor="#fff" />
        <stop offset=".7" stopColor="#fff" />
        <stop offset="1" stopColor="#98a4ec" stopOpacity="0" />
      </linearGradient>
      <radialGradient id="spot">
        <stop offset="0" stopColor="#fff" />
        <stop offset=".25" stopColor="#f0f3ff" stopOpacity=".9" />
        <stop offset=".5" stopColor="#b8c2fa" stopOpacity=".5" />
        <stop offset="1" stopColor="#a0abf0" stopOpacity="0" />
      </radialGradient>
    </defs>
    <path d={flap} fill="url(#flap)" />
    <g clipPath="url(#body)">
      <path d={body} fill="#8690d0" />
      <g filter="url(#soft)">
        <path d="M470 430L700 430 730 500 690 560 460 500z" fill="#95a0e8" />
        <path d="M420 560L560 590 610 620 600 720 420 640z" fill="#6f75a5" />
        <path d="M590 640L640 650 690 700 670 730 590 690z" fill="#6f76a6" />
        <path d="M720 640L860 650 890 740 720 730z" fill="#96a1e9" />
        <path d="M1070 780L1200 755 1440 775 1460 870 1040 870z" fill="#646b9d" />
        <path d="M1200 620L1440 700 1440 740 1200 690z" fill="#8e99de" />
        <path d="M900 680L1000 700 980 780 890 740z" fill="#97a3ec" />
      </g>
      <g filter="url(#mid)">
        <path d="M730 512C790 550 870 580 960 588S1130 600 1230 592C1170 630 1060 636 960 622S790 580 730 512z" fill="#5f6697" />
        <path d="M1240 520L1300 560 1395 620 1440 650 1340 605 1270 570z" fill="#50557c" />
      </g>
      <g filter="url(#near)" fill="none">
        <path d="M1250 525L1335 585 1450 656" stroke="#5f6489" strokeWidth="8" />
        <path d="M1170 462L1250 520" stroke="#6d74a8" strokeWidth="7" />
        <path d="M590 418L672 409 720 400 800 392 900 395" stroke="#70759f" strokeWidth="7" />
        <path d="M690 460C720 500 800 535 890 562" stroke="#94a0e8" strokeWidth="11" />
        <path d="M1290 638L1440 694" stroke="url(#streak)" strokeWidth="17" />
        <path d="M1415 686L1440 692" stroke="#dfe5ff" strokeWidth="8" />
        <path d="M1045 838L1075 815" stroke="#63678c" strokeWidth="18" />
      </g>
      <g filter="url(#fine)" fill="none">
        <path d="M720 492C780 532 840 555 903 570" stroke="url(#shine)" strokeWidth="5" />
        <path d="M901 569C950 580 1020 588 1085 589 1120 591 1150 591 1190 588" stroke="url(#shine)" strokeWidth="3" />
      </g>
      <ellipse cx="936" cy="744" rx="46" ry="28" fill="url(#spot)" />
      <path d={cap} fill="#828cca" />
    </g>
    <g fill="none" stroke="#05051e" shapeRendering="crispEdges">
      <path d={curve(rimBack)} />
      <path d={curve(leftEdge)} />
      <path d={curve(bottomLeft)} />
      <path d={curve(bottomMiddle)} />
      <path d={curve(flapEdge)} />
      <path d="M488 430C490 426 493 424 500 424" />
      <path d="M705 738v10" />
      {seams.map((pts, i) => <path key={i} d={curve(pts)} />)}
      {selected.map((pts, i) => <path key={i} d={curve(pts)} />)}
    </g>
    <g fill="none" stroke="#e9b052" strokeDasharray="14 1 9 2 5 2" shapeRendering="crispEdges">
      {selected.map((pts, i) => <path key={i} d={curve(pts)} />)}
    </g>
  </svg>
);

const viewTools = [
  { icon: "refit", label: "重新调整" },
  { icon: "zoomIn", label: "放大" },
  { icon: "zoomOut", label: "缩小" },
  { icon: "repaint", label: "重画" },
  { icon: "display", label: "显示样式", menu: true },
  { icon: "savedViews", label: "已保存方向", menu: true },
  { icon: "viewManager", label: "视图管理器" },
  { icon: "datum", label: "基准显示过滤器", menu: true },
  { icon: "annotation", label: "注释显示" },
  { icon: "spin", label: "旋转中心" },
];

const Viewport = () => (
  <main className="relative min-w-0 flex-1 bg-linear-to-b from-[#015e9e] via-[#00386a] to-[#000f30]">
    <Model />
    <p className="absolute bottom-[77px] left-[9px] text-xs text-[#8e99a5]">插入模式</p>
    <div className="absolute right-[53px] bottom-[7px] text-center text-xs leading-[14px] font-extralight text-[#9aa3ae] font-['DejaVu_Sans',sans-serif]">
      <p>X.X+-0.1</p>
      <p>X.XX+-0.01</p>
      <p>X.XXX+-0.001</p>
      <p>ANG.+-0.5</p>
    </div>
    <div className="absolute top-[255px] right-[5px] flex w-8 flex-col divide-y divide-[#cfd2d4] border border-[#dfe2e4] bg-white">
      <span className="h-[5px] bg-[#eceeef]" />
      {viewTools.map((tool) => (
        <button key={tool.icon} aria-label={tool.label} className="relative flex h-[31px] items-center justify-center">
          <Icon name={tool.icon} className="size-5" />
          {tool.menu && (
            <svg viewBox="0 0 4 4" className="absolute right-[3px] bottom-[2px] size-1" aria-hidden="true">
              <path d="M4 0v4H0z" fill="#222" />
            </svg>
          )}
        </button>
      ))}
      <span className="h-[6px] bg-[#eceeef]" />
    </div>
  </main>
);

/* ---------- status bar ---------- */

const Divider = () => <span className="h-7 w-px shrink-0 bg-[#dadcdf]" />;

const StatusBar = () => (
  <footer className="flex h-[35px] shrink-0 items-center border-t-2 border-[#8f939b] bg-[#eef0f2] pb-px text-xs text-[#333]">
    <button aria-label="切换导航器" className="ml-[6px] flex size-[22px] items-center justify-center border border-[#b5b5b5] bg-[#e3e5e6]">
      <Icon name="treeTab" />
    </button>
    <button aria-label="切换浏览器" className="mr-2 ml-1 flex size-[22px] items-center justify-center border border-[#cfcfcf] bg-[#f6f6f6]">
      <Icon name="browser" className="size-[15px]" />
    </button>
    <Divider />
    <span className="mr-[5px] ml-2 size-[5px] rounded-full bg-[#2b6385]" />
    <p className="flex-1">基准平面将不显示。</p>
    <Divider />
    <span className="w-[35px]" />
    <Divider />
    <div className="flex w-9 items-center justify-center gap-px">
      <span className="size-[11px] rounded-full bg-[#4fd14b]" />
      <span className="size-[6px] rounded-full bg-[#c9cbcd]" />
      <span className="size-[6px] rounded-full bg-[#c9cbcd]" />
    </div>
    <Divider />
    <span className="flex w-10 pl-1"><Icon name="flag" /></span>
    <Divider />
    <button aria-label="搜索" className="mx-[3px] flex h-6 w-[39px] items-center justify-center rounded-xs border border-[#bbb] bg-linear-to-b from-white to-[#e4e4e4]">
      <Icon name="binoculars" />
    </button>
    <Divider />
    <div className="relative z-30 mr-[18px] ml-[97px] flex h-[18px] w-[176px] items-center border border-[#c9cbcd]">
      <select aria-label="选择过滤器" className="h-full flex-1 appearance-none bg-transparent pl-[6px] text-xs text-[#555]">
        <option>智能</option>
      </select>
      <span className="flex h-full w-[14px] items-center justify-center border-l border-[#d5d7d9]"><Caret /></span>
    </div>
  </footer>
);

const Watermark = () => (
  <div className="pointer-events-none absolute right-0 bottom-0 z-20 h-[63px] w-[207px] bg-white/35">
    <svg viewBox="0 0 62 62" className="absolute bottom-0 left-0 size-[62px]" aria-hidden="true">
      <g fill="none">
        <ellipse cx="45" cy="39" rx="9" ry="20" transform="rotate(28 45 39)" stroke="#c4364a" strokeWidth="3" opacity=".7" />
        <ellipse cx="24" cy="22" rx="14" ry="23" transform="rotate(-42 24 22)" stroke="#1b4570" strokeWidth="3" opacity=".9" />
        <path d="M28 36c-10 0-20 3-17 11 2 5 8 6 14 5" stroke="#8b96a3" strokeWidth="2" opacity=".6" />
      </g>
    </svg>
    <div className="absolute top-0 left-[70px] flex flex-col whitespace-nowrap">
      <span className="text-[29px] leading-[38px] font-black text-[#0c7a50]/80">野火论坛</span>
      <span className="self-end -ml-[13px] text-[15px] leading-5 text-[#b5d8cb] font-['Open_Sans',sans-serif]">www.proewildfire.cn</span>
    </div>
  </div>
);

export default function App() {
  return (
    <div className="h-screen min-h-[840px] border border-[#5a5a5a] bg-[#989898] p-[3px] font-['Noto_Sans','Noto_Sans_CJK_SC',sans-serif]">
      <div className="relative flex h-full flex-col bg-[#fcfcfc]">
        <TitleBar />
        <TabBar />
        <Ribbon />
        <div className="mr-1 flex min-h-0 flex-1">
          <ModelTree />
          <Viewport />
        </div>
        <StatusBar />
        <Watermark />
      </div>
    </div>
  );
}
